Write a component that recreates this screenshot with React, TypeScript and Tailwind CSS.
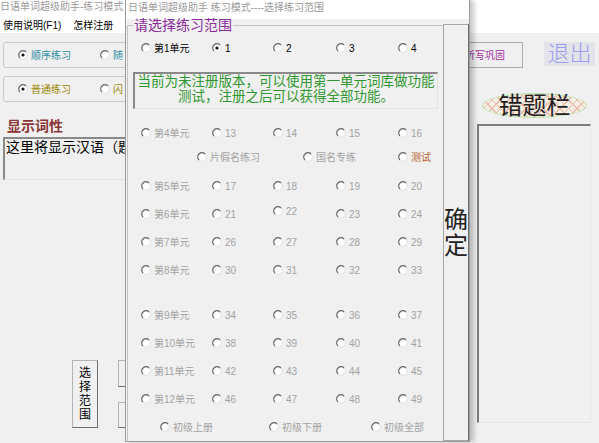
import React from 'react'

type RadioProps = {
    label: string;
    checked?: boolean;
    tone?: string;
    className?: string;
};

const Radio = ({ label, checked = false, tone = "text-[#a3a3a3]", className = "" }: RadioProps) => (
    <div className={`flex items-center gap-[3px] whitespace-nowrap ${className}`}>
        <svg width="10" height="10" viewBox="0 0 10 10" className="shrink-0">
            <circle cx="5" cy="5" r="4.3" fill="#ffffff" stroke="#dadada" strokeWidth="0.8" />
            <path d="M1.96 8.04 A4.3 4.3 0 0 1 8.04 1.96" fill="none" stroke="#6b6b6b" strokeWidth="1.3" />
            {checked && <circle cx="5" cy="5" r="1.6" fill="#111111" />}
        </svg>
        <span className={tone}>{label}</span>
    </div>
);

const unitRows: string[][] = [
    ["第5单元", "17", "18", "19", "20"],
    ["第6单元", "21", "22", "23", "24"],
    ["第7单元", "26", "27", "28", "29"],
    ["第8单元", "30", "31", "32", "33"],
];

const unitRows2: string[][] = [
    ["第9单元", "34", "35", "36", "37"],
    ["第10单元", "38", "39", "40", "41"],
    ["第11单元", "42", "43", "44", "45"],
    ["第12单元", "46", "47", "48", "49"],
];

const gridRow = "grid grid-cols-[71px_61px_63px_62px_1fr] items-center pl-[13px]";

const RangeDialog = () => (
    <div className="absolute left-[125px] top-0 z-10 flex h-[442px] w-[345px] flex-col border-x border-b border-[#9c9c9c] bg-[#f0f0f0] shadow-[4px_0_5px_rgba(0,0,0,0.22)]">
        <div className="h-[20px] bg-white pl-[2px] text-[10px] leading-[15px] text-[#9a9a9a]">
            日语单词超级助手 练习模式----选择练习范围
        </div>
        <div className="flex flex-1">
            <fieldset className="ml-[1px] h-full w-[316px] border-l border-t border-[#c4c4c4] text-[10px]">
                <legend className="ml-[5px] px-[1px] text-[14px] leading-[12px] text-[#8b2c9c]">请选择练习范围</legend>

                <div className={`${gridRow} h-[34px]`}>
                    <Radio label="第1单元" tone="text-black" />
                    <Radio label="1" checked tone="text-black" />
                    <Radio label="2" tone="text-black" />
                    <Radio label="3" tone="text-black" />
                    <Radio label="4" tone="text-black" />
                </div>

                <div className="ml-[5px] mt-[7px] flex h-[37px] w-[305px] flex-col items-center border-l-2 border-t-2 border-b border-r border-l-[#8a8a8a] border-t-[#8a8a8a] border-b-[#e2e2e2] border-r-[#e2e2e2] text-[13.5px] leading-[15px] text-[#2f972f]">
                    <div>当前为未注册版本，可以使用第一单元词库做功能</div>
                    <div>测试，注册之后可以获得全部功能。</div>
                </div>

                <div className={`${gridRow} mt-[12px] h-[24px]`}>
                    <Radio label="第4单元" />
                    <Radio label="13" />
                    <Radio label="14" />
                    <Radio label="15" />
                    <Radio label="16" />
                </div>
                <div className="grid h-[24px] grid-cols-[106px_95px_1fr] items-center pl-[69px]">
                    <Radio label="片假名练习" />
                    <Radio label="国名专练" />
                    <Radio label="测试" tone="text-[#b5602c]" />
                </div>

                <div className="mt-[3px]">
                    {unitRows.map((row) => (
                        <div key={row[0]} className={`${gridRow} h-[28px]`}>
                            {row.map((label) => (
                                <Radio key={label} label={label} className={label === "22" ? "mb-[6px]" : ""} />
                            ))}
                        </div>
                    ))}
                </div>

                <div className="mt-[17px]">
                    {unitRows2.map((row) => (
                        <div key={row[0]} className={`${gridRow} h-[28px]`}>
                            {row.map((label) => (
                                <Radio key={label} label={label} />
                            ))}
                        </div>
                    ))}
                </div>

                <div className="grid h-[28px] grid-cols-[109px_102px_1fr] items-center pl-[32px]">
                    <Radio label="初级上册" />
                    <Radio label="初级下册" />
                    <Radio label="初级全部" />
                </div>
            </fieldset>
            <button className="mt-[5px] flex w-[26px] flex-col items-center justify-center border border-[#a6a6a6] border-r-[#6e6e6e] bg-[#f0f0f0] text-[24px] leading-[26px] text-[#222]">
                <span>确</span>
                <span>定</span>
            </button>
        </div>
    </div>
);

const App = () => {
    return (
        <div className="relative h-[443px] w-[599px] overflow-hidden bg-[#f0f0f0] font-['Liberation_Sans','Noto_Sans_CJK_SC',sans-serif]">
            <div className="h-[33px] bg-white">
                <div className="h-[18px] text-[10px] leading-[14px] text-[#9a9a9a]">日语单词超级助手-练习模式</div>
                <div className="flex gap-[12px] px-[3px] text-[10px] leading-[15px] text-black">
                    <span>使用说明(F1)</span>
                    <span>怎样注册</span>
                </div>
            </div>

            <div className="flex">
                {/* only the part left of the dialog shows */}
                <div className="w-[125px] overflow-hidden pl-[3px]">
                    <div className="mt-[9px] flex h-[26px] w-[290px] items-center rounded-[3px] border border-[#cacaca] pl-[14px] text-[10px]">
                        <Radio label="顺序练习" checked tone="text-[#2b8da0]" className="w-[82px]" />
                        <Radio label="随" tone="text-[#2b8da0]" />
                    </div>
                    <div className="mt-[8px] flex h-[26px] w-[290px] items-center rounded-[3px] border border-[#cacaca] pl-[14px] text-[10px]">
                        <Radio label="普通练习" checked tone="text-[#9a8600]" className="w-[82px]" />
                        <Radio label="闪" tone="text-[#9a8600]" />
                    </div>
                    <div className="mt-[16px] pl-[4px] text-[14px] font-bold leading-[16px] text-[#8b3535]">显示词性</div>
                    <div className="mt-[3px] h-[43px] w-[290px] border-l-2 border-t-2 border-b border-r border-l-[#8a8a8a] border-t-[#8a8a8a] border-b-[#e2e2e2] border-r-[#e2e2e2] pl-[1px] text-[14px] leading-[17px] text-black">
                        这里将显示汉语（题
                    </div>
                    <div className="mt-[180px] flex">
                        <button className="ml-[69px] flex h-[68px] w-[26px] shrink-0 flex-col items-center justify-center border border-[#b4b4b4] border-b-[#6e6e6e] border-r-[#6e6e6e] bg-[#f0f0f0] text-[12px] leading-[14px] text-black">
                            <span>选</span>
                            <span>择</span>
                            <span>范</span>
                            <span>围</span>
                        </button>
                        <div className="ml-[20px] flex shrink-0 flex-col">
                            <button className="h-[27px] w-[70px] border border-[#b4b4b4] border-b-[#6e6e6e] border-r-[#6e6e6e] bg-[#f0f0f0]" />
                            <button className="mt-[15px] h-[26px] w-[70px] border border-[#b4b4b4] border-b-[#6e6e6e] bg-[#f0f0f0]" />
                        </div>
                    </div>
                </div>

                <div className="ml-auto w-[152px]">
                    <div className="mt-[9px] flex items-start">
                        <button className="h-[26px] w-[76px] border border-[#adadad] bg-[#f0f0f0] text-[10px] text-[#a12ea0]">听写巩固</button>
                        <div className="ml-[21px] flex h-[24px] w-[51px] items-center justify-center bg-[#e3e3ea] text-[22px] font-light leading-none text-[#9c9cef]">
                            退出
                        </div>
                    </div>
                    <div className="ml-[35px] mt-[25px] flex h-[25px] w-[105px] items-center justify-center rounded-[50%] border border-[#b8e6ad] bg-[image:repeating-linear-gradient(45deg,#e9bcae_0px,#e9bcae_1px,transparent_1px,transparent_6px),repeating-linear-gradient(-45deg,#e9bcae_0px,#e9bcae_1px,#f4efe4_1px,#f4efe4_6px)] text-[24px] leading-none text-[#222]">
                        错题栏
                    </div>
                    <div className="ml-[30px] mt-[6px] h-[299px] w-[114px] border-l-2 border-t-2 border-b border-r border-l-[#7c7c7c] border-t-[#7c7c7c] border-b-[#e6e6e6] border-r-[#e6e6e6] bg-[#f0f0f0]" />
                </div>
            </div>

            <RangeDialog />
        </div>
    );
};

export default App
